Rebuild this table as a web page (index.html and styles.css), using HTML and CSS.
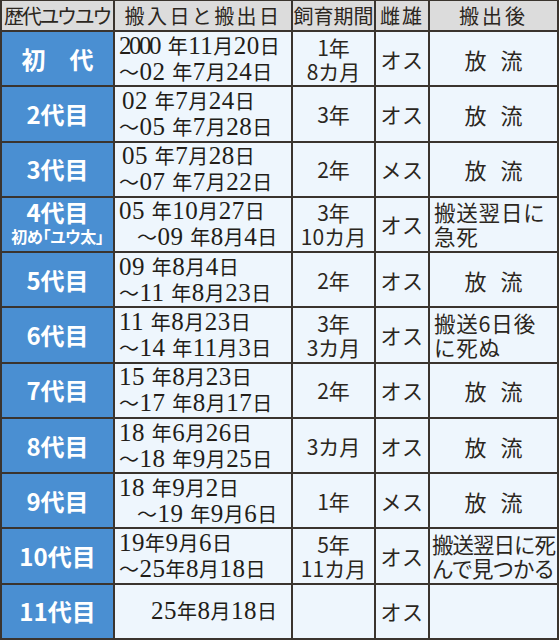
FILE: index.html
```html
<!DOCTYPE html>
<html lang="ja">
<head>
<meta charset="utf-8">
<link rel="stylesheet" href="styles.css">
</head>
<body>
<div class="table">
  <div class="hd hd-name">歴代ユウユウ</div>
  <div class="hd hd-date">搬入日と搬出日</div>
  <div class="hd">飼育期間</div>
  <div class="hd hd-sex">雌雄</div>
  <div class="hd hd-after">搬出後</div>

  <div class="gen">初　代</div>
  <div class="date"><div><span class="c">2000</span> <span class="k">年</span>11<span class="k">月</span>20<span class="k">日</span></div><div><span class="k">～</span>02 <span class="k">年</span>7<span class="k">月</span>24<span class="k">日</span></div></div>
  <div class="per"><p>1年<br>8カ月</p></div>
  <div class="sex">オス</div>
  <div class="after">放 流</div>

  <div class="gen">2代目</div>
  <div class="date"><div class="i1">02 <span class="k">年</span>7<span class="k">月</span>24<span class="k">日</span></div><div><span class="k">～</span>05 <span class="k">年</span>7<span class="k">月</span>28<span class="k">日</span></div></div>
  <div class="per"><p>3年</p></div>
  <div class="sex">オス</div>
  <div class="after">放 流</div>

  <div class="gen">3代目</div>
  <div class="date"><div class="i1">05 <span class="k">年</span>7<span class="k">月</span>28<span class="k">日</span></div><div><span class="k">～</span>07 <span class="k">年</span>7<span class="k">月</span>22<span class="k">日</span></div></div>
  <div class="per"><p>2年</p></div>
  <div class="sex">メス</div>
  <div class="after">放 流</div>

  <div class="gen gen-two"><p>4代目<br><span class="sub">初め「ユウ太」</span></p></div>
  <div class="date"><div>05 <span class="k">年</span>10<span class="k">月</span>27<span class="k">日</span></div><div class="i2"><span class="k">～</span>09 <span class="k">年</span>8<span class="k">月</span>4<span class="k">日</span></div></div>
  <div class="per"><p>3年<br>10カ月</p></div>
  <div class="sex">オス</div>
  <div class="after note"><p>搬送翌日に<br>急死</p></div>

  <div class="gen">5代目</div>
  <div class="date"><div>09 <span class="k">年</span>8<span class="k">月</span>4<span class="k">日</span></div><div><span class="k">～</span>11 <span class="k">年</span>8<span class="k">月</span>23<span class="k">日</span></div></div>
  <div class="per"><p>2年</p></div>
  <div class="sex">オス</div>
  <div class="after">放 流</div>

  <div class="gen">6代目</div>
  <div class="date"><div>11 <span class="k">年</span>8<span class="k">月</span>23<span class="k">日</span></div><div><span class="k">～</span>14 <span class="k">年</span>11<span class="k">月</span>3<span class="k">日</span></div></div>
  <div class="per"><p>3年<br>3カ月</p></div>
  <div class="sex">オス</div>
  <div class="after note"><p>搬送6日後<br>に死ぬ</p></div>

  <div class="gen">7代目</div>
  <div class="date"><div>15 <span class="k">年</span>8<span class="k">月</span>23<span class="k">日</span></div><div><span class="k">～</span>17 <span class="k">年</span>8<span class="k">月</span>17<span class="k">日</span></div></div>
  <div class="per"><p>2年</p></div>
  <div class="sex">オス</div>
  <div class="after">放 流</div>

  <div class="gen">8代目</div>
  <div class="date"><div>18 <span class="k">年</span>6<span class="k">月</span>26<span class="k">日</span></div><div><span class="k">～</span>18 <span class="k">年</span>9<span class="k">月</span>25<span class="k">日</span></div></div>
  <div class="per"><p>3カ月</p></div>
  <div class="sex">オス</div>
  <div class="after">放 流</div>

  <div class="gen">9代目</div>
  <div class="date"><div>18 <span class="k">年</span>9<span class="k">月</span>2<span class="k">日</span></div><div class="i2"><span class="k">～</span>19 <span class="k">年</span>9<span class="k">月</span>6<span class="k">日</span></div></div>
  <div class="per"><p>1年</p></div>
  <div class="sex">メス</div>
  <div class="after">放 流</div>

  <div class="gen">10代目</div>
  <div class="date"><div>19<span class="k">年</span>9<span class="k">月</span>6<span class="k">日</span></div><div><span class="k">～</span>25<span class="k">年</span>8<span class="k">月</span>18<span class="k">日</span></div></div>
  <div class="per"><p>5年<br>11カ月</p></div>
  <div class="sex">オス</div>
  <div class="after note tight"><p>搬送翌日に死<br>んで見つかる</p></div>

  <div class="gen">11代目</div>
  <div class="date"><div class="i3">25<span class="k">年</span>8<span class="k">月</span>18<span class="k">日</span></div></div>
  <div class="per"></div>
  <div class="sex">オス</div>
  <div class="after"></div>
</div>
</body>
</html>
```

FILE: styles.css
```css
html, body {
  margin: 0;
  padding: 0;
  background: #ffffff;
}

.table {
  width: 559px;
  height: 640px;
  box-sizing: border-box;
  display: grid;
  grid-template-columns: 111px 176px 81px 52px 127px;
  grid-template-rows: 29px repeat(11, 1fr);
  gap: 2px;
  padding: 1px 2px 2px 2px;
  background: #3a342e;
  font-family: "Noto Sans CJK JP", sans-serif;
  color: #2b2620;
}

.table p {
  margin: 0;
}

.table > div {
  background: #eef6fd;
  display: flex;
  flex-direction: column;
  justify-content: center;
  align-items: center;
  white-space: nowrap;
}

.table > .hd {
  background: #dcdcdc;
  font-size: 20px;
  line-height: 1;
}

.table > .hd-name {
  align-items: flex-start;
  padding-left: 2px;
  letter-spacing: -2.3px;
}

.hd-date {
  letter-spacing: 2.4px;
}

.hd-sex {
  letter-spacing: 2px;
}

.hd-after {
  letter-spacing: 3px;
}

.table > .gen {
  background: #4a8fd2;
  color: #ffffff;
  font-weight: 700;
  font-size: 24px;
  line-height: 28px;
}

.table > .gen-two {
  line-height: 21px;
  text-align: center;
}

.gen .sub {
  font-size: 16px;
  letter-spacing: -0.3px;
  font-feature-settings: "palt";
}

.table > .date {
  align-items: flex-start;
  padding-left: 4px;
  font-family: "Liberation Serif", "Noto Sans CJK JP", serif;
  font-size: 25px;
  line-height: 26px;
  letter-spacing: 0.5px;
  color: #221d18;
}

.date .k {
  font-family: "Noto Sans CJK JP", sans-serif;
  font-size: 20px;
  font-weight: 400;
}

.date .c {
  letter-spacing: -2.5px;
  margin-right: 2px;
}

.date .i1 {
  padding-left: 3px;
}

.date .i2 {
  padding-left: 18px;
}

.date .i3 {
  padding-left: 32px;
}

.table > .per {
  font-size: 21px;
  line-height: 24px;
  text-align: center;
}

.table > .sex {
  font-size: 21px;
  letter-spacing: 0.5px;
}

.table > .after {
  font-size: 22px;
  word-spacing: 9px;
}

.table > .note {
  align-items: flex-start;
  padding-left: 4px;
  font-size: 21.5px;
  line-height: 24px;
  letter-spacing: 0.8px;
}

.table > .tight {
  padding-left: 2px;
  letter-spacing: -1px;
  font-size: 21.5px;
}
```
